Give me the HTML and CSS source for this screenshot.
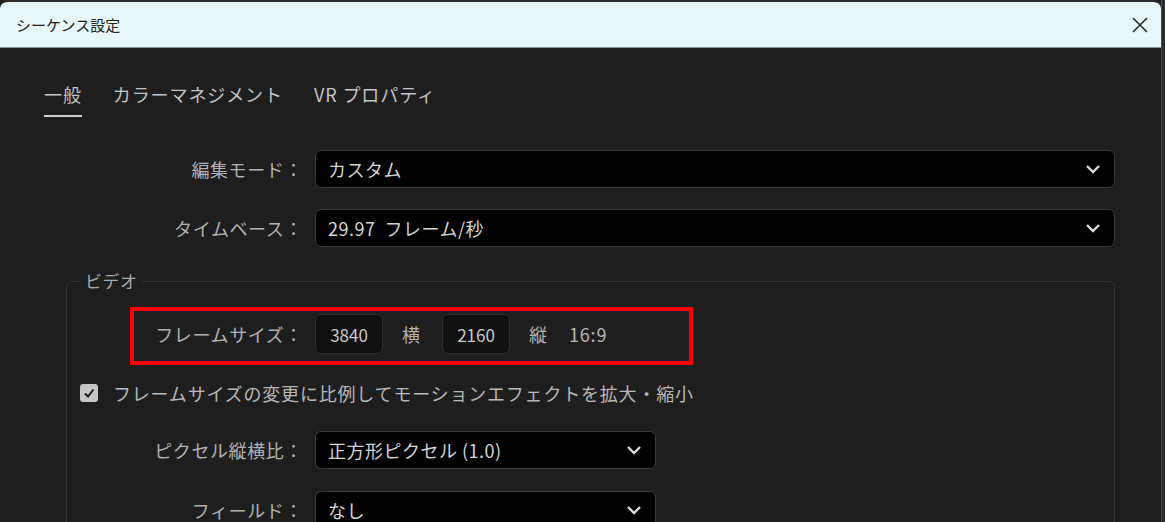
FILE: index.html
```html
<!DOCTYPE html>
<html lang="ja">
<head>
  <meta charset="UTF-8" />
  <meta name="viewport" content="width=device-width, initial-scale=1.0"/>
  <title>シーケンス設定</title>
  <link rel="stylesheet" href="styles.css">
</head>
<body>
  <div class="window">
    <div class="titlebar">
      <span class="title">シーケンス設定</span>
      <svg class="close" width="16" height="16" viewBox="0 0 16 16">
        <path d="M1 1 L15 15 M15 1 L1 15" stroke="#2b2b2b" stroke-width="1.6" fill="none"/>
      </svg>
    </div>

    <div class="tabs">
      <span class="tab active">一般</span>
      <span class="tab">カラーマネジメント</span>
      <span class="tab">VR プロパティ</span>
    </div>

    <div class="row first">
      <label class="label">編集モード：</label>
      <div class="select wide">
        <span>カスタム</span>
        <svg class="chev" width="16" height="10" viewBox="0 0 16 10"><path d="M2 2 L8 8 L14 2" stroke="#dcdcdc" stroke-width="2.4" fill="none"/></svg>
      </div>
    </div>
    <div class="row">
      <label class="label">タイムベース：</label>
      <div class="select wide">
        <span>29.97&nbsp; フレーム/秒</span>
        <svg class="chev" width="16" height="10" viewBox="0 0 16 10"><path d="M2 2 L8 8 L14 2" stroke="#dcdcdc" stroke-width="2.4" fill="none"/></svg>
      </div>
    </div>

    <fieldset class="group">
      <legend>ビデオ</legend>
      <div class="row frame">
        <label class="label inset">フレームサイズ：</label>
        <div class="num">3840</div>
        <span class="unit">横</span>
        <div class="num">2160</div>
        <span class="unit">縦</span>
        <span class="ratio">16:9</span>
      </div>
      <div class="check-row">
        <span class="checkbox">
          <svg width="12" height="12" viewBox="0 0 12 12"><path d="M2 6.5 L5 9.5 L10.5 2.5" stroke="#1b1b1b" stroke-width="2" fill="none"/></svg>
        </span>
        <span>フレームサイズの変更に比例してモーションエフェクトを拡大・縮小</span>
      </div>
      <div class="row pixel">
        <label class="label inset">ピクセル縦横比：</label>
        <div class="select narrow">
          <span>正方形ピクセル (1.0)</span>
          <svg class="chev" width="16" height="10" viewBox="0 0 16 10"><path d="M2 2 L8 8 L14 2" stroke="#dcdcdc" stroke-width="2.4" fill="none"/></svg>
        </div>
      </div>
      <div class="row field">
        <label class="label inset">フィールド：</label>
        <div class="select narrow">
          <span>なし</span>
          <svg class="chev" width="16" height="10" viewBox="0 0 16 10"><path d="M2 2 L8 8 L14 2" stroke="#dcdcdc" stroke-width="2.4" fill="none"/></svg>
        </div>
      </div>
    </fieldset>
  </div>

  <div class="highlight"></div>
</body>
</html>
```

FILE: styles.css
```css
body {
  margin: 0;
  background: #2a2a2a;
  font-family: "Noto Sans CJK JP", "Noto Sans", sans-serif;
  height: 522px;
  overflow: hidden;
  position: relative;
}

.window {
  width: 1161px;
  height: 522px;
  background: #1e1e1e;
  border-right: 1px solid #4a4a4a;
  overflow: hidden;
}

.titlebar {
  height: 45px;
  border-top: 2px solid #2b2b2b;
  border-bottom: 1px solid #8c9696;
  background: #e5f7f6;
  border-radius: 8px 8px 0 0;
  display: flex;
  align-items: center;
  justify-content: space-between;
  padding: 0 13px 0 16px;
}

.title {
  font-size: 15px;
  color: #222;
}

.tabs {
  display: flex;
  gap: 31px;
  padding: 34px 0 0 44px;
}

.tab {
  font-size: 18px;
  letter-spacing: 0.9px;
  line-height: 24px;
  color: #c4c4c4;
  padding-bottom: 9px;
  border-bottom: 2px solid transparent;
}

.tab.active {
  border-bottom-color: #d0d0d0;
}

.row {
  display: flex;
  align-items: center;
  margin-top: 21px;
}

.row.first {
  margin-top: 33px;
}

.label {
  width: 315px;
  box-sizing: border-box;
  padding-right: 12px;
  text-align: right;
  font-size: 18px;
  letter-spacing: 0.6px;
  color: #b2b2b2;
  flex-shrink: 0;
}

.label.inset {
  width: 248px;
}

.select {
  height: 38px;
  box-sizing: border-box;
  background: #000;
  border: 1px solid #383838;
  border-radius: 6px;
  display: flex;
  align-items: center;
  justify-content: space-between;
  padding: 0 13px 0 12px;
  font-size: 18px;
  letter-spacing: 0.5px;
  color: #d4d4d4;
}

.select.wide {
  width: 800px;
}

.select.narrow {
  width: 341px;
}

.group {
  margin: 22px 0 0 66px;
  width: 1049px;
  box-sizing: border-box;
  padding: 0 0 30px;
  border: 1px solid #333;
  border-radius: 6px;
}

.group legend {
  margin-left: 14px;
  padding: 0 4px;
  font-size: 17px;
  letter-spacing: 0.5px;
  color: #a8a8a8;
  line-height: 24px;
}

.row.frame {
  margin-top: 21px;
}

.num {
  width: 68px;
  height: 40px;
  box-sizing: border-box;
  background: #101010;
  border: 1px solid #2c2c2c;
  border-radius: 6px;
  display: flex;
  align-items: center;
  justify-content: center;
  font-size: 17px;
  color: #c8c8c8;
}

.unit {
  margin: 0 22px 0 19px;
  font-size: 18px;
  color: #b2b2b2;
}

.ratio {
  font-size: 18px;
  letter-spacing: 0.8px;
  color: #b8b8b8;
}

.check-row {
  display: flex;
  align-items: center;
  gap: 15px;
  margin: 26px 0 0 13px;
  font-size: 18px;
  letter-spacing: 0.8px;
  color: #b8b8b8;
}

.checkbox {
  width: 18px;
  height: 18px;
  background: #c6c6c6;
  border-radius: 3px;
  display: flex;
  align-items: center;
  justify-content: center;
}

.row.pixel {
  margin-top: 25px;
}

.row.field {
  margin-top: 22px;
}

.highlight {
  position: absolute;
  left: 130px;
  top: 307px;
  width: 555px;
  height: 50px;
  border: 4px solid #ff0000;
}
```
